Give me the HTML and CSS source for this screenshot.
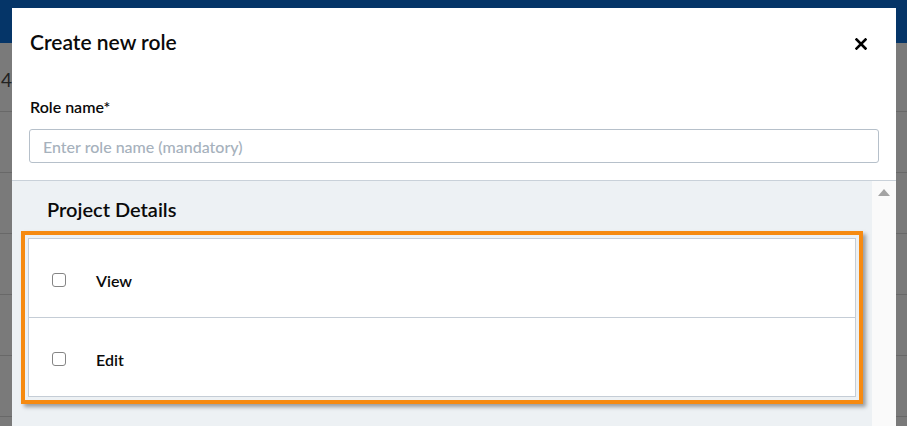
FILE: index.html
```html
<!DOCTYPE html>
<html lang="en">
<head>
<meta charset="utf-8">
<title>Create new role</title>
<link rel="stylesheet" href="styles.css">
</head>
<body>
<div class="page">
  <header class="topbar"></header>
  <div class="table">
    <div class="trow trow-first"><span class="cell-num">4</span></div>
    <div class="trow"></div>
    <div class="trow"></div>
    <div class="trow"></div>
    <div class="trow"></div>
    <div class="trow"></div>
  </div>
</div>

<div class="modal" role="dialog" aria-labelledby="modal-title">
  <div class="modal-header">
    <h1 class="modal-title" id="modal-title">Create new role</h1>
    <button class="close-btn" aria-label="Close">
      <svg width="12" height="12" viewBox="0 0 12 12"><path d="M1.5 1.5 L10.5 10.5 M10.5 1.5 L1.5 10.5" stroke="#000" stroke-width="2.6" stroke-linecap="square" fill="none"/></svg>
    </button>
  </div>
  <div class="modal-body">
    <label class="field-label" for="role-name">Role name*</label>
    <input class="field-input" id="role-name" type="text" placeholder="Enter role name (mandatory)">
  </div>
  <div class="scroll-section">
    <div class="scroll-content">
      <h2 class="section-title">Project Details</h2>
      <div class="highlight">
        <div class="perm-panel">
          <label class="perm-row"><input type="checkbox" class="perm-check"><span class="perm-label">View</span></label>
          <label class="perm-row"><input type="checkbox" class="perm-check"><span class="perm-label">Edit</span></label>
        </div>
      </div>
    </div>
    <div class="scrollbar"><span class="scroll-arrow"></span></div>
  </div>
</div>
</body>
</html>
```

FILE: styles.css
```css
* { box-sizing: border-box; }
html, body { margin: 0; padding: 0; }
body {
  font-family: Lato, "Open Sans", "Liberation Sans", sans-serif;
  color: #111;
  width: 907px;
  height: 426px;
  overflow: hidden;
  position: relative;
  background: #7a7a7a;
}
.page { width: 907px; height: 426px; }
.topbar { height: 43px; background: #053568; }
.table { display: flex; flex-direction: column; }
.trow {
  height: 61px;
  border-bottom: 1px solid #686868;
  display: flex;
  align-items: center;
}
.trow-first { height: 69px; }
.cell-num {
  font-size: 19px;
  color: #222;
  padding-left: 1px;
  margin-top: 5px;
}

.modal {
  position: absolute;
  left: 12px;
  top: 8px;
  width: 884px;
  height: 430px;
  background: #fff;
  display: flex;
  flex-direction: column;
}
.modal-header {
  display: flex;
  justify-content: space-between;
  align-items: center;
  padding: 21px 29px 0 18px;
}
.modal-title {
  margin: 0;
  font-size: 21px;
  line-height: 26px;
  font-weight: 600;
  color: #0a0a0a;
}
.close-btn {
  border: 0;
  background: none;
  padding: 0;
  width: 12px;
  height: 12px;
  display: flex;
  margin-top: 4px;
}
.modal-body {
  display: flex;
  flex-direction: column;
  padding: 0 17px;
}
.field-label {
  margin-top: 42px;
  font-size: 16px;
  line-height: 20px;
  font-weight: 600;
  color: #0a0a0a;
  padding-left: 1px;
}
.field-input {
  margin-top: 12px;
  height: 34px;
  border: 1px solid #b6c0ca;
  border-radius: 3px;
  padding: 0 13px;
  font-family: inherit;
  font-size: 16px;
  font-weight: 500;
  color: #333;
  outline: none;
}
.field-input::placeholder { color: #a6b1bc; }

.scroll-section {
  margin-top: 17px;
  border-top: 1px solid #c9d1d9;
  display: flex;
  flex: 1;
}
.scroll-content {
  flex: 1;
  background: #edf1f4;
  padding: 16px 9px 0 9px;
}
.section-title {
  margin: 0 0 10px 26px;
  font-size: 20px;
  line-height: 24px;
  font-weight: 600;
  color: #0a0a0a;
}
.highlight {
  border: 4px solid #f68a10;
  padding: 3px;
  box-shadow: 3px 3px 4px rgba(0, 0, 0, 0.35);
}
.perm-panel {
  background: #fff;
  border: 1px solid #c5cdd6;
  display: flex;
  flex-direction: column;
}
.perm-row {
  height: 78px;
  display: flex;
  align-items: center;
  padding: 4px 0 0 23px;
  gap: 30px;
}
.perm-row + .perm-row { border-top: 1px solid #c5cdd6; height: 79px; }
.perm-check {
  appearance: none;
  -webkit-appearance: none;
  margin: 0;
  width: 14px;
  height: 14px;
  border: 1px solid #858585;
  border-radius: 3px;
  background: #fff;
}
.perm-label {
  font-size: 16px;
  font-weight: 600;
  color: #0a0a0a;
}
.scrollbar {
  width: 24px;
  background: #fafafa;
  display: flex;
  justify-content: center;
  padding-top: 8px;
}
.scroll-arrow {
  width: 0;
  height: 0;
  border-left: 6.5px solid transparent;
  border-right: 6.5px solid transparent;
  border-bottom: 7px solid #a3a3a3;
  margin-left: -1px;
}
```
